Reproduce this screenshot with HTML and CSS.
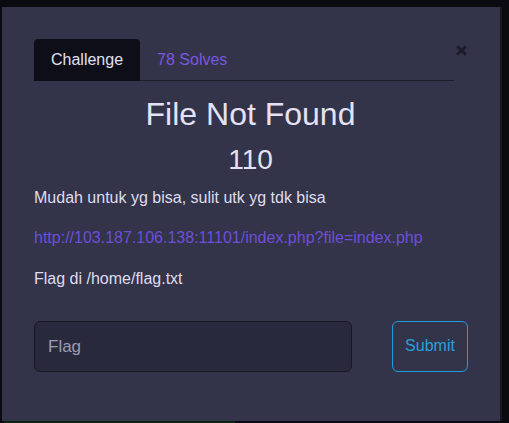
FILE: index.html
```html
<!DOCTYPE html>
<html>
<head>
<meta charset="utf-8">
<link rel="stylesheet" href="styles.css">
</head>
<body>
<div class="modal">
  <div class="header">
    <ul class="tabs">
      <li class="tab active">Challenge</li>
      <li class="tab link">78 Solves</li>
    </ul>
    <button class="close" aria-label="Close">
      <svg width="11" height="11" viewBox="0 0 11 11"><path d="M1.2 1.2 L9.8 9.8 M9.8 1.2 L1.2 9.8" stroke="#1b1b29" stroke-width="2.8" stroke-linecap="butt"/></svg>
    </button>
  </div>
  <h2 class="title">File Not Found</h2>
  <h3 class="value">110</h3>
  <p class="text">Mudah untuk yg bisa, sulit utk yg tdk bisa</p>
  <p class="text text-link"><a class="url" href="#">http://103.187.106.138:11101/index.php?file=index.php</a></p>
  <p class="text">Flag di /home/flag.txt</p>
  <form class="form">
    <input class="flag" type="text" placeholder="Flag">
    <button class="submit" type="button">Submit</button>
  </form>
</div>
<div class="under"></div>
</body>
</html>
```
FILE: styles.css
```css
html, body {
  margin: 0;
  padding: 0;
}
body {
  background: #0a0a11;
  font-family: "Liberation Sans", Arial, sans-serif;
  color: #dfdded;
  width: 509px;
  height: 423px;
  overflow: hidden;
}
.modal {
  margin: 7px 9px 0 2px;
  height: 414px;
  box-sizing: border-box;
  background: #33334a;
  padding: 32px 33px 0 32px;
  box-shadow: 2px 0 0 0 #17171d;
}
.header {
  display: flex;
  align-items: flex-start;
}
.tabs {
  flex: 1;
  display: flex;
  list-style: none;
  margin: 0;
  padding: 0;
  border-bottom: 1px solid #1d1d2b;
}
.tab {
  padding: 8px 16px;
  border: 1px solid transparent;
  border-radius: 4px 4px 0 0;
  margin-bottom: -1px;
  font-size: 16px;
  line-height: 24px;
}
.tab.active {
  background: #0e0e18;
  color: #e2e0f0;
}
.tab.link {
  color: #7a58e0;
}
.close {
  width: 13px;
  margin: 6px 0 0 0;
  padding: 0 0 0 2px;
  border: 0;
  background: transparent;
  display: flex;
  line-height: 0;
}
.title {
  margin: 14px 0 10px;
  font-size: 32px;
  line-height: 1.2;
  font-weight: 400;
  text-align: center;
  color: #e4e2f4;
}
.value {
  margin: 0 0 9px;
  font-size: 28px;
  line-height: 1.2;
  font-weight: 400;
  text-align: center;
  color: #e4e2f4;
}
.text {
  margin: 0 0 16px;
  font-size: 16px;
  line-height: 24px;
}
.text-link {
  margin-bottom: 17px;
}
.url {
  color: #6d4fd8;
  text-decoration: none;
}
.form {
  margin: 30px -1px 0 0;
  display: flex;
  justify-content: space-between;
  align-items: flex-start;
}
.flag {
  width: 318px;
  height: 51px;
  box-sizing: border-box;
  background: #29293d;
  border: 1px solid #191926;
  border-radius: 6px;
  padding: 2px 13px 0;
  font-family: "Liberation Sans", Arial, sans-serif;
  font-size: 17px;
  color: #e3e1f3;
  outline: none;
}
.flag::placeholder {
  color: #9d9bb4;
}
.submit {
  width: 76px;
  height: 51px;
  box-sizing: border-box;
  background: transparent;
  border: 1px solid #1c9fdc;
  border-radius: 6px;
  color: #25a2dd;
  font-family: "Liberation Sans", Arial, sans-serif;
  font-size: 16px;
  padding: 0 12px;
}
.under {
  margin-left: 4px;
  width: 231px;
  height: 2px;
  background: #0c2510;
}
```
